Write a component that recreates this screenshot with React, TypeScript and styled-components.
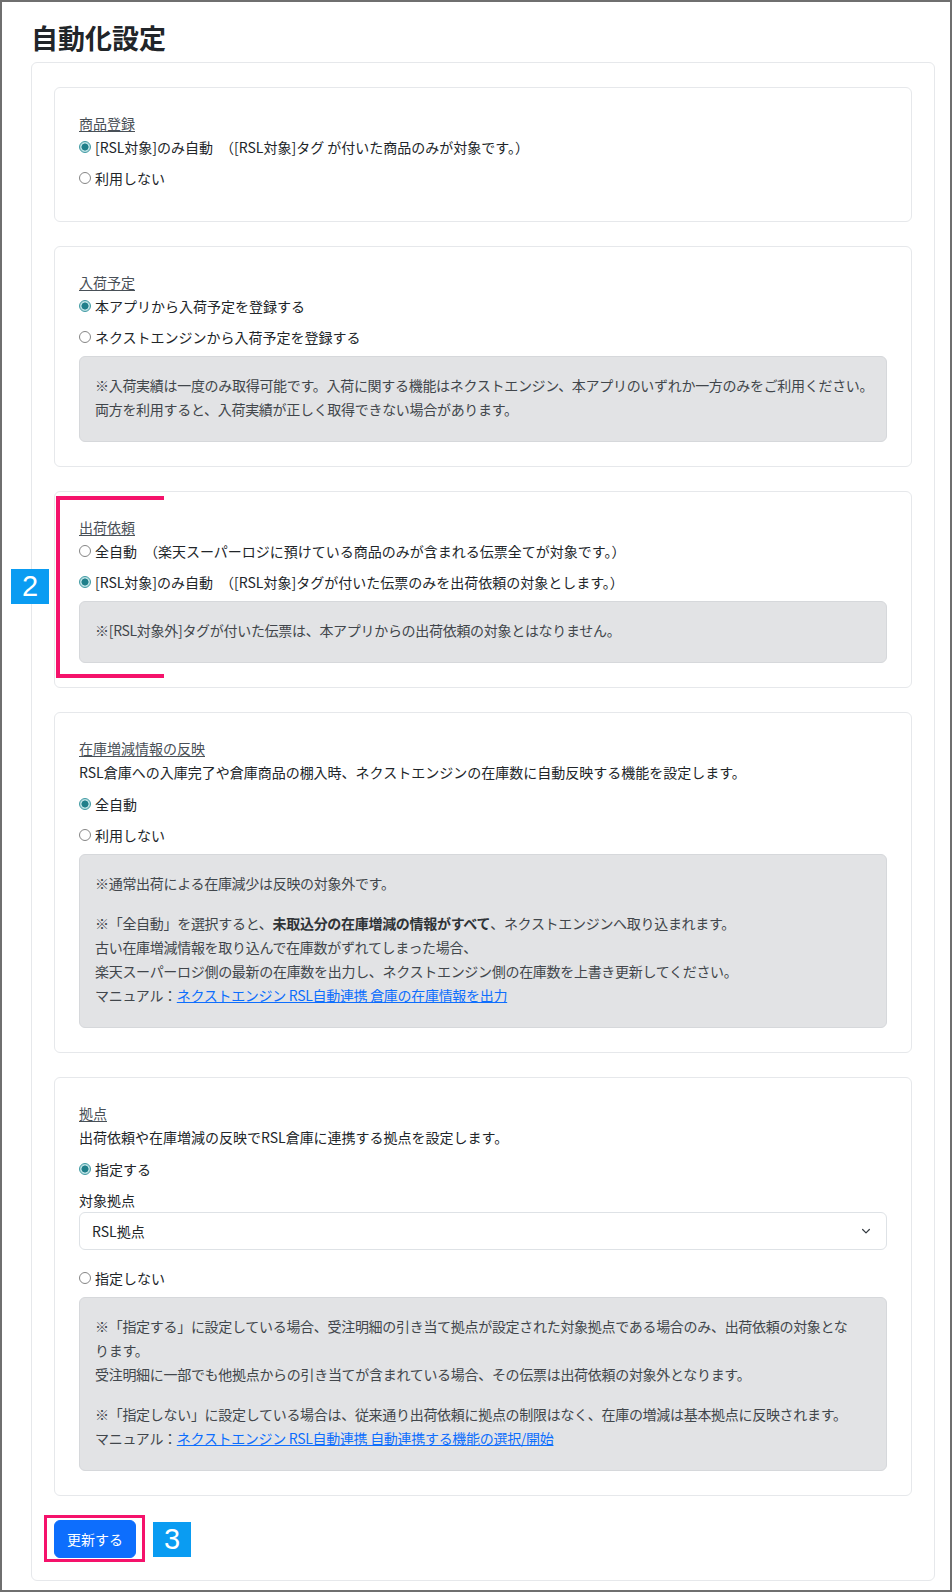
import React from 'react'
import styled, { createGlobalStyle } from 'styled-components'

const GlobalStyle = createGlobalStyle`
  body {
    margin: 0;
    background: #fff;
    font-family: 'Noto Sans CJK JP', 'Noto Sans', sans-serif;
    font-size: 14px;
    color: #212529;
  }
`

const Frame = styled.div`
  box-sizing: border-box;
  width: 952px;
  height: 1592px;
  padding: 20px 15px 0 29px;
  border: 2px solid #6f6f6f;
  background: #fff;
`

const Title = styled.h1`
  margin: 0 0 8px;
  font-size: 27px;
  font-weight: 700;
  line-height: 32px;
  color: #212529;
`

const Panel = styled.div`
  border: 1px solid #e6e8eb;
  border-radius: 6px;
  padding: 24px 22px 22px;
`

const Stack = styled.div`
  display: flex;
  flex-direction: column;
  gap: 24px;
`

const Card = styled.section`
  position: relative;
  border: 1px solid #e6e8eb;
  border-radius: 6px;
  padding: 24px;
`

const Heading = styled.div`
  line-height: 23px;
  color: #495057;
  text-decoration: underline;
  text-underline-offset: 2px;
`

const Desc = styled.div`
  line-height: 24px;
  margin-bottom: 8px;
  color: #212529;
`

const RadioRow = styled.label`
  display: flex;
  align-items: center;
  gap: 4px;
  height: 23px;
  margin-bottom: 8px;
  color: #212529;
  white-space: nowrap;
`

const RadioDot = styled.span<{ $on?: boolean }>`
  box-sizing: border-box;
  flex: none;
  width: 12px;
  height: 12px;
  border-radius: 50%;
  border: 1px solid ${(p) => (p.$on ? '#3f9aa3' : '#858585')};
  background: ${(p) =>
    p.$on
      ? 'radial-gradient(circle, #1f7f8a 0 3.2px, #b9dfe2 3.8px)'
      : '#fff'};
`

const Note = styled.div`
  background: #e2e3e5;
  border: 1px solid #d6d8db;
  border-radius: 6px;
  padding: 16px 15px 20px;
  color: #41464b;
  line-height: 24px;
`

const NoteP = styled.p`
  margin: 0 0 16px;
  white-space: nowrap;
  letter-spacing: -0.3px;
  &:last-child {
    margin-bottom: 0;
  }
  b {
    font-weight: 700;
    color: #2f3337;
  }
`

const Link = styled.a`
  color: #0d6efd;
  text-decoration: underline;
`

const FieldLabel = styled.div`
  line-height: 24px;
  color: #212529;
`

const Select = styled.div`
  box-sizing: border-box;
  display: flex;
  align-items: center;
  justify-content: space-between;
  height: 38px;
  margin-bottom: 16px;
  padding: 0 12px;
  border: 1px solid #dee2e6;
  border-radius: 6px;
  color: #212529;
`

const Footer = styled.div`
  display: flex;
  align-items: center;
  gap: 17px;
  margin-top: 24px;
`

const ButtonWrap = styled.div`
  position: relative;
`

const Button = styled.button`
  box-sizing: border-box;
  height: 38px;
  padding: 0 12px;
  border: 1px solid #0d6efd;
  border-radius: 6px;
  background: #0d6efd;
  color: #fff;
  font-family: inherit;
  font-size: 14px;
  line-height: 24px;
`

const RedBox = styled.span`
  position: absolute;
  top: -5px;
  left: -10px;
  right: -9px;
  bottom: -4px;
  border: 3px solid #f5126b;
  pointer-events: none;
`

const RedBracket = styled.span`
  position: absolute;
  top: 4px;
  left: 1px;
  width: 104px;
  height: 174px;
  border: 4px solid #f5126b;
  border-right: none;
  pointer-events: none;
`

const Badge = styled.span<{ $overlay?: boolean }>`
  ${(p) => (p.$overlay ? 'position: absolute; top: 77px; left: -44px;' : '')}
  display: flex;
  align-items: center;
  justify-content: center;
  width: 38px;
  height: 35px;
  background: #0a9cf2;
  color: #fff;
  font-family: 'Liberation Sans', Arial, sans-serif;
  font-size: 29px;
  line-height: 1;
`

const Chevron = () => (
  <svg width="16" height="12" viewBox="0 0 16 16" fill="none">
    <path d="M3.5 6l4.5 4.5L12.5 6" stroke="#343a40" strokeWidth="1.6" strokeLinecap="round" strokeLinejoin="round" />
  </svg>
)

const Radio = ({ on, children }: { on?: boolean; children: React.ReactNode }) => (
  <RadioRow>
    <RadioDot $on={on} />
    <span>{children}</span>
  </RadioRow>
)

export default function App() {
  return (
    <Frame>
      <GlobalStyle />
      <Title>自動化設定</Title>
      <Panel>
        <Stack>
          <Card>
            <Heading>商品登録</Heading>
            <Radio on>[RSL対象]のみ自動　（[RSL対象]タグ が付いた商品のみが対象です。）</Radio>
            <Radio>利用しない</Radio>
          </Card>

          <Card>
            <Heading>入荷予定</Heading>
            <Radio on>本アプリから入荷予定を登録する</Radio>
            <Radio>ネクストエンジンから入荷予定を登録する</Radio>
            <Note>
              <NoteP>
                ※入荷実績は一度のみ取得可能です。入荷に関する機能はネクストエンジン、本アプリのいずれか一方のみをご利用ください。
                <br />
                両方を利用すると、入荷実績が正しく取得できない場合があります。
              </NoteP>
            </Note>
          </Card>

          <Card>
            <RedBracket />
            <Badge $overlay>2</Badge>
            <Heading>出荷依頼</Heading>
            <Radio>全自動　（楽天スーパーロジに預けている商品のみが含まれる伝票全てが対象です。）</Radio>
            <Radio on>[RSL対象]のみ自動　（[RSL対象]タグが付いた伝票のみを出荷依頼の対象とします。）</Radio>
            <Note>
              <NoteP>※[RSL対象外]タグが付いた伝票は、本アプリからの出荷依頼の対象とはなりません。</NoteP>
            </Note>
          </Card>

          <Card>
            <Heading>在庫増減情報の反映</Heading>
            <Desc>RSL倉庫への入庫完了や倉庫商品の棚入時、ネクストエンジンの在庫数に自動反映する機能を設定します。</Desc>
            <Radio on>全自動</Radio>
            <Radio>利用しない</Radio>
            <Note>
              <NoteP>※通常出荷による在庫減少は反映の対象外です。</NoteP>
              <NoteP>
                ※「全自動」を選択すると、<b>未取込分の在庫増減の情報がすべて</b>、ネクストエンジンへ取り込まれます。
                <br />
                古い在庫増減情報を取り込んで在庫数がずれてしまった場合、
                <br />
                楽天スーパーロジ側の最新の在庫数を出力し、ネクストエンジン側の在庫数を上書き更新してください。
                <br />
                マニュアル：<Link href="#">ネクストエンジン RSL自動連携 倉庫の在庫情報を出力</Link>
              </NoteP>
            </Note>
          </Card>

          <Card>
            <Heading>拠点</Heading>
            <Desc>出荷依頼や在庫増減の反映でRSL倉庫に連携する拠点を設定します。</Desc>
            <Radio on>指定する</Radio>
            <FieldLabel>対象拠点</FieldLabel>
            <Select>
              <span>RSL拠点</span>
              <Chevron />
            </Select>
            <Radio>指定しない</Radio>
            <Note>
              <NoteP>
                ※「指定する」に設定している場合、受注明細の引き当て拠点が設定された対象拠点である場合のみ、出荷依頼の対象とな
                <br />
                ります。
                <br />
                受注明細に一部でも他拠点からの引き当てが含まれている場合、その伝票は出荷依頼の対象外となります。
              </NoteP>
              <NoteP>
                ※「指定しない」に設定している場合は、従来通り出荷依頼に拠点の制限はなく、在庫の増減は基本拠点に反映されます。
                <br />
                マニュアル：<Link href="#">ネクストエンジン RSL自動連携 自動連携する機能の選択/開始</Link>
              </NoteP>
            </Note>
          </Card>
        </Stack>

        <Footer>
          <ButtonWrap>
            <Button type="button">更新する</Button>
            <RedBox />
          </ButtonWrap>
          <Badge>3</Badge>
        </Footer>
      </Panel>
    </Frame>
  )
}
